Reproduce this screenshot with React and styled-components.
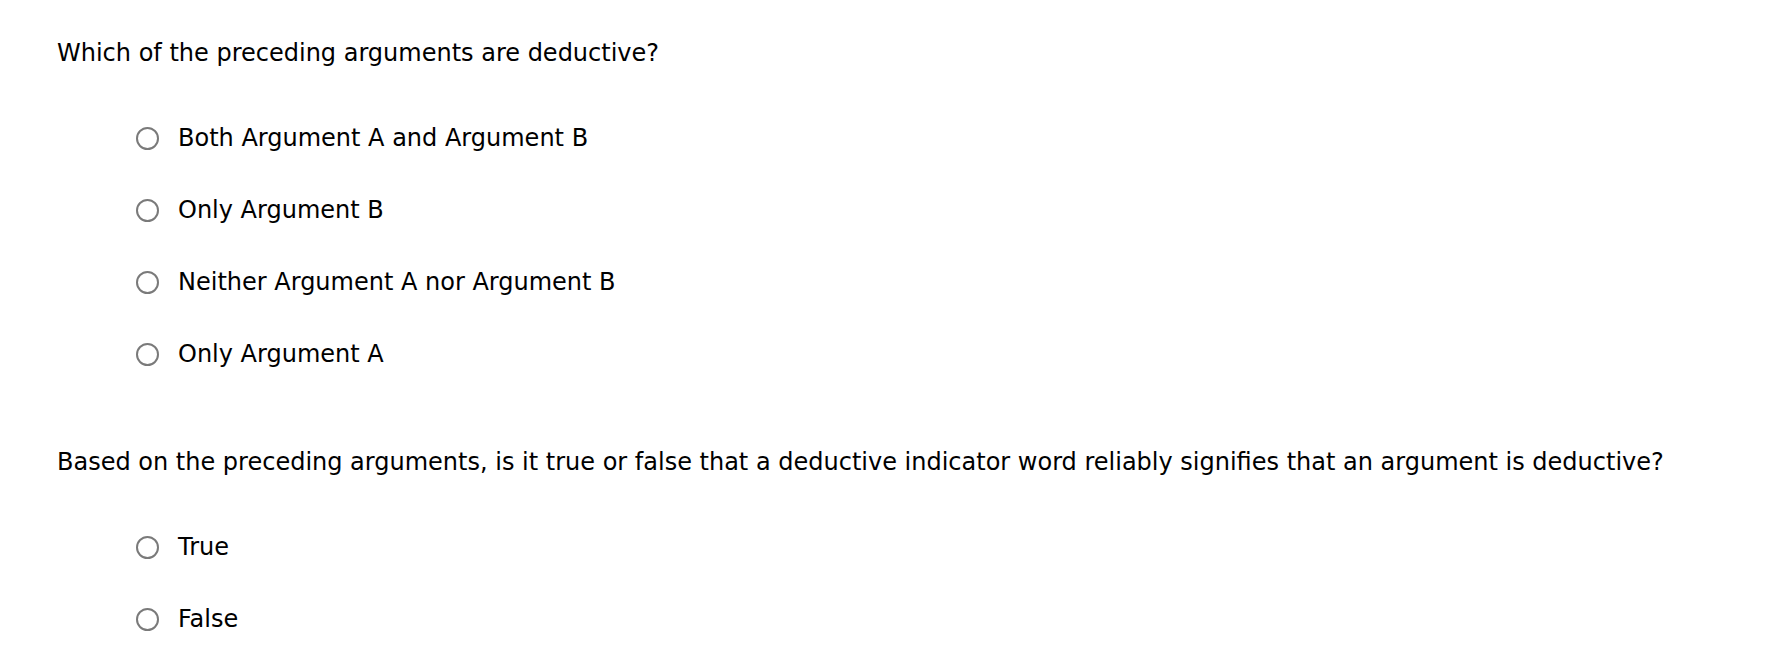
import React from 'react'
import styled, { createGlobalStyle } from 'styled-components'

const GlobalStyle = createGlobalStyle`
  body {
    margin: 0;
    background: #fff;
    font-family: "DejaVu Sans", Verdana, sans-serif;
    color: #000;
  }
`

const Page = styled.div`
  padding: 38px 0 0 57px;
`

const Question = styled.p`
  margin: 0;
  font-size: 24px;
  line-height: 30px;
`

const OptionList = styled.div`
  margin: ${(p) => p.top}px 0 ${(p) => p.bottom}px 79px;
  display: flex;
  flex-direction: column;
`

const OptionRow = styled.label`
  height: 72px;
  display: flex;
  align-items: center;
  font-size: 24px;
`

const Radio = styled.input.attrs({ type: 'radio' })`
  appearance: none;
  margin: 0 19px 0 0;
  width: 23px;
  height: 23px;
  border: 2px solid #7a7a7a;
  border-radius: 50%;
  background: #fff;
  flex-shrink: 0;
`

const questions = [
  {
    id: 'q1',
    text: 'Which of the preceding arguments are deductive?',
    options: [
      'Both Argument A and Argument B',
      'Only Argument B',
      'Neither Argument A nor Argument B',
      'Only Argument A',
    ],
  },
  {
    id: 'q2',
    text: 'Based on the preceding arguments, is it true or false that a deductive indicator word reliably signifies that an argument is deductive?',
    options: ['True', 'False'],
  },
]

const App = () => {
  return (
    <>
      <GlobalStyle />
      <Page>
        {questions.map((q, i) => (
          <div key={q.id}>
            <Question>{q.text}</Question>
            <OptionList top={34} bottom={i === 0 ? 57 : 0}>
              {q.options.map((o) => (
                <OptionRow key={o}>
                  <Radio name={q.id} />
                  {o}
                </OptionRow>
              ))}
            </OptionList>
          </div>
        ))}
      </Page>
    </>
  )
}

export default App
